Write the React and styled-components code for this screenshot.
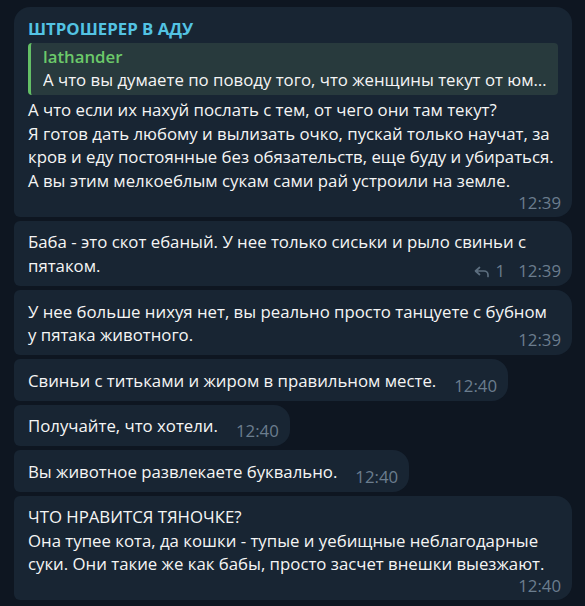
import React from "react";
import styled, { createGlobalStyle } from "styled-components";

const GlobalStyle = createGlobalStyle`
  html, body {
    margin: 0;
    background: #0e1621;
  }
  body {
    font-family: "Open Sans", "Noto Sans", sans-serif;
    -webkit-font-smoothing: antialiased;
  }
`;

const messages = [
  {
    id: 1,
    sender: "ШТРОШЕРЕР В АДУ",
    quote: {
      author: "lathander",
      text: "А что вы думаете по поводу того, что женщины текут от юм…",
    },
    text: [
      "А что если их нахуй послать с тем, от чего они там  текут?",
      "Я готов дать любому и вылизать очко, пускай только научат, за кров и еду постоянные без обязательств, еще буду и убираться.",
      "А вы этим мелкоеблым сукам сами рай устроили на земле.",
    ],
    time: "12:39",
    timeRow: true,
  },
  {
    id: 2,
    text: ["Баба - это скот ебаный. У нее только сиськи и рыло свиньи с пятаком."],
    time: "12:39",
    replies: 1,
  },
  {
    id: 3,
    text: ["У нее больше нихуя нет, вы реально просто танцуете с бубном у пятака животного."],
    time: "12:39",
  },
  { id: 4, text: ["Свиньи с титьками и жиром в правильном месте."], time: "12:40" },
  { id: 5, text: ["Получайте, что хотели."], time: "12:40" },
  { id: 6, text: ["Вы животное развлекаете буквально."], time: "12:40" },
  {
    id: 7,
    text: [
      "ЧТО НРАВИТСЯ ТЯНОЧКЕ?",
      "Она тупее кота, да кошки - тупые и уебищные неблагодарные суки. Они такие же как бабы, просто засчет внешки выезжают.",
    ],
    time: "12:40",
    timeRow: true,
  },
];

function ReplyIcon() {
  return (
    <svg width="16" height="12" viewBox="0 0 16 12" fill="none">
      <path
        d="M5.5 1.5 L1.5 5 L5.5 8.5 M1.8 5 H10 a4 4 0 0 1 4 4 V10.5"
        stroke="#5c6e7f"
        strokeWidth="1.7"
        strokeLinecap="round"
        strokeLinejoin="round"
      />
    </svg>
  );
}

function MetaInfo({ message, row }) {
  return (
    <Meta $row={row}>
      {message.replies && (
        <Replies>
          <ReplyIcon />
          {message.replies}
        </Replies>
      )}
      {message.time}
    </Meta>
  );
}

export default function App() {
  return (
    <>
      <GlobalStyle />
      <Chat>
        {messages.map((m, i) => (
          <Bubble key={m.id} $first={i === 0}>
            {m.sender && <Sender>{m.sender}</Sender>}
            {m.quote && (
              <Quote>
                <QuoteAuthor>{m.quote.author}</QuoteAuthor>
                <QuoteText>{m.quote.text}</QuoteText>
              </Quote>
            )}
            <Text $afterQuote={!!m.quote}>
              {m.text.map((line, j) => (
                <React.Fragment key={j}>
                  {j > 0 && <br />}
                  {line}
                </React.Fragment>
              ))}
              {!m.timeRow && <MetaInfo message={m} />}
            </Text>
            {m.timeRow && <MetaInfo message={m} row />}
          </Bubble>
        ))}
      </Chat>
    </>
  );
}

const Chat = styled.div`
  display: flex;
  flex-direction: column;
  align-items: flex-start;
  gap: 4px;
  padding: 7px 13px 0 14px;
`;

const Bubble = styled.div`
  display: flow-root;
  box-sizing: border-box;
  max-width: 100%;
  padding: 9.5px 14px 3.5px 14px;
  background: #182533;
  border-radius: ${(p) => (p.$first ? "16px" : "6px")} 16px 16px 6px;
  color: #f5f5f5;
  font-size: 16.8px;
  line-height: 23.5px;
`;

const Sender = styled.div`
  color: #53c3e3;
  font-weight: 700;
  line-height: 23.5px;
`;

const Quote = styled.div`
  margin-top: 3px;
  padding: 3px 6px 4px 12px;
  border-left: 3px solid #64bf66;
  border-radius: 4px;
  background: #283a3d;
  line-height: 22.5px;
`;

const QuoteAuthor = styled.div`
  color: #6cc96a;
  font-weight: 600;
`;

const QuoteText = styled.div`
  white-space: nowrap;
  overflow: hidden;
  text-overflow: ellipsis;
`;

const Text = styled.div`
  margin-top: ${(p) => (p.$afterQuote ? "3px" : "0")};
  line-height: ${(p) => (p.$afterQuote ? "23.7px" : "23.5px")};
  word-wrap: break-word;
`;

const Meta = styled.span`
  color: #6b7d8e;
  white-space: nowrap;
  ${(p) =>
    p.$row
      ? `
    display: block;
    text-align: right;
    line-height: 14px;
    margin: 3px -3px 3.5px 0;
  `
      : `
    float: right;
    line-height: 23.5px;
    margin: 5px -3px 0 18px;
  `}
`;

const Replies = styled.span`
  display: inline-flex;
  align-items: center;
  gap: 6px;
  margin-right: 13px;
  svg {
    position: relative;
    top: 1px;
  }
`;
